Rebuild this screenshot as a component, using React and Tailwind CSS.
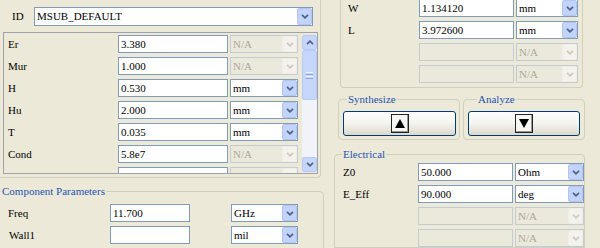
import clsx from "clsx";

const Chevron = ({ up, color }) => (
  <svg width="8" height="5" viewBox="0 0 8 5">
    <path d={up ? "M1 4.2 L4 1.2 L7 4.2" : "M1 0.8 L4 3.8 L7 0.8"} fill="none" stroke={color} strokeWidth="1.7" />
  </svg>
);

const TextBox = ({ value, className, disabled }) => (
  <div
    className={clsx(
      "h-[18px] border flex items-center pl-[2px] shrink-0 leading-none",
      disabled ? "border-[#c3cbd3] bg-[#ebe9dc]" : "border-[#7f9db9] bg-white",
      className
    )}
  >
    {value}
  </div>
);

const Combo = ({ value, className, disabled }) => (
  <div
    className={clsx(
      "h-[18px] border flex items-center shrink-0",
      disabled ? "border-[#c3cbd3] bg-[#ebe9dc] text-[#aca899]" : "border-[#7f9db9] bg-white",
      className
    )}
  >
    <span className="flex-1 pl-[2px] leading-none">{value}</span>
    <div
      className={clsx(
        "w-[15px] h-full flex items-center justify-center rounded-[2px] border",
        disabled ? "bg-[#f3f2ec] border-[#efeee8]" : "bg-[#c3d4fb] border-[#b3c6f1]"
      )}
    >
      <Chevron color={disabled ? "#cdcbc0" : "#4d6185"} />
    </div>
  </div>
);

const Group = ({ title, titleClass, className, children }) => (
  <div className={clsx("relative border border-[#d0d0bf]", className)}>
    <span className={clsx("absolute top-[-7px] bg-[#ece9d8] px-[1px] text-[#2553b0] leading-[12px]", titleClass)}>
      {title}
    </span>
    {children}
  </div>
);

const ScrollBtn = ({ up }) => (
  <div className="h-[15px] w-[15px] rounded-[2px] border border-[#b6cbf4] bg-[#c6d6fb] flex items-center justify-center shrink-0">
    <Chevron up={up} color="#4d6185" />
  </div>
);

const substrate = [
  ["Er", "3.380", "N/A", true],
  ["Mur", "1.000", "N/A", true],
  ["H", "0.530", "mm", false],
  ["Hu", "2.000", "mm", false],
  ["T", "0.035", "mm", false],
  ["Cond", "5.8e7", "N/A", true],
  ["TanD", "0.001", "N/A", true],
];

const physical = [
  ["W", "1.134120", "mm", false],
  ["L", "3.972600", "mm", false],
  ["", "", "N/A", true],
  ["", "", "N/A", true],
];

const electrical = [
  ["Z0", "50.000", "Ohm", false],
  ["E_Eff", "90.000", "deg", false],
  ["", "", "N/A", true],
  ["", "", "N/A", true],
];

const CalcButton = ({ up, className }) => (
  <div
    className={clsx(
      "h-[25px] rounded-[3px] border border-[#003c74] bg-gradient-to-b from-[#fefefe] via-[#f4f3ee] to-[#dcd8cc] flex items-center justify-center",
      className
    )}
  >
    <div className="w-[18px] h-[19px] border border-[#222] bg-[#f6f6f3] flex items-center justify-center shadow-[inset_-1px_-1px_0_#999]">
      <svg width="10" height="9" viewBox="0 0 10 9">
        <path d={up ? "M5 0 L10 9 L0 9 Z" : "M0 0 L10 0 L5 9 Z"} fill="#000" />
      </svg>
    </div>
  </div>
);

export default function App() {
  return (
    <div className="w-[600px] h-[248px] overflow-hidden bg-[#ece9d8] flex [font-family:'Liberation_Serif',serif] font-normal text-[11px] text-black">
      {/* left column */}
      <div className="w-[326px] shrink-0 flex flex-col">
        <div className="w-[321px] h-[178px] shrink-0 border-r border-b border-[#d0d0bf] rounded-br-[4px] pt-[7px]">
          <div className="flex items-center h-[19px]">
            <span className="w-[34px] pl-[12px]">ID</span>
            <div className="w-[279px] h-[19px] border border-[#7f9db9] bg-white flex items-center">
              <span className="flex-1 pl-[2px]">MSUB_DEFAULT</span>
              <div className="w-[15px] h-full rounded-[2px] border border-[#b3c6f1] bg-[#c3d4fb] flex items-center justify-center">
                <Chevron color="#4d6185" />
              </div>
            </div>
          </div>
          <div className="ml-[3px] mt-[6px] w-[315px] h-[142px] border border-[#9ea3a9] flex overflow-hidden">
            <div className="w-[298px] pt-[2px] flex flex-col gap-[4px]">
              {substrate.map(([label, value, unit, dis]) => (
                <div key={label} className="flex items-center h-[18px] shrink-0">
                  <span className="w-[114px] pl-[4px]">{label}</span>
                  <TextBox value={value} className="w-[110px]" />
                  <Combo value={unit} disabled={dis} className="ml-[2px] w-[68px]" />
                </div>
              ))}
            </div>
            <div className="ml-[2px] mt-[2px] w-[15px] h-[137px] bg-[#f1f3f9] flex flex-col">
              <ScrollBtn up />
              <div className="h-[50px] w-[15px] rounded-[2px] border border-[#b6cbf4] bg-[#c6d6fb] flex flex-col items-center justify-center gap-[1px]">
                <div className="w-[7px] h-[1px] bg-[#eef3ff]" />
                <div className="w-[7px] h-[1px] bg-[#8ca6de]" />
                <div className="w-[7px] h-[1px] bg-[#eef3ff]" />
                <div className="w-[7px] h-[1px] bg-[#8ca6de]" />
              </div>
              <div className="flex-1" />
              <ScrollBtn />
            </div>
          </div>
        </div>

        <Group
          title="Component Parameters"
          titleClass="left-[1px]"
          className="mt-[13px] w-[324px] h-[70px] border-l-0 border-b-0 rounded-tr-[5px] pt-[12px]"
        >
          <div className="flex flex-col gap-[4px]">
            <div className="flex items-center h-[18px]">
              <span className="w-[110px] pl-[8px]">Freq</span>
              <TextBox value="11.700" className="w-[80px] h-[17px]" />
              <Combo value="GHz" className="ml-[41px] w-[67px]" />
            </div>
            <div className="flex items-center h-[18px]">
              <span className="w-[110px] pl-[9px]">Wall1</span>
              <TextBox value="" className="w-[80px] h-[17px]" />
              <Combo value="mil" className="ml-[41px] w-[67px]" />
            </div>
          </div>
        </Group>
      </div>

      {/* right column */}
      <div className="flex-1 flex flex-col">
        <div className="ml-[14px] w-[243px] h-[89px] shrink-0 border-l border-r border-b border-[#d0d0bf] rounded-b-[4px] mt-[-1px] flex flex-col gap-[4px]">
          {physical.map(([label, value, unit, dis], i) => (
            <div key={i} className="flex items-center h-[18px] shrink-0">
              <span className="w-[78px] pl-[7px]">{label}</span>
              <TextBox value={value} disabled={dis} className="w-[95px]" />
              <Combo value={unit} disabled={dis} className="ml-[2px] w-[62px]" />
            </div>
          ))}
        </div>

        <div className="flex mt-[11px] shrink-0">
          <Group
            title="Synthesize"
            titleClass="left-[8px]"
            className="ml-[12px] w-[122px] h-[41px] rounded-[4px] pt-[11px] pl-[4px]"
          >
            <CalcButton up className="w-[113px]" />
          </Group>
          <Group
            title="Analyze"
            titleClass="left-[13px]"
            className="ml-[3px] w-[122px] h-[41px] rounded-[4px] pt-[11px] pl-[4px]"
          >
            <CalcButton className="w-[112px]" />
          </Group>
        </div>

        <Group
          title="Electrical"
          titleClass="left-[7px]"
          className="mt-[14px] ml-[8px] w-[251px] h-[120px] rounded-t-[4px] pt-[8px] flex flex-col gap-[4px]"
        >
          {electrical.map(([label, value, unit, dis], i) => (
            <div key={i} className="flex items-center h-[18px] shrink-0">
              <span className="w-[83px] pl-[8px]">{label}</span>
              <TextBox value={value} disabled={dis} className="w-[95px]" />
              <Combo value={unit} disabled={dis} className="ml-[2px] w-[69px]" />
            </div>
          ))}
        </Group>
      </div>
    </div>
  );
}
